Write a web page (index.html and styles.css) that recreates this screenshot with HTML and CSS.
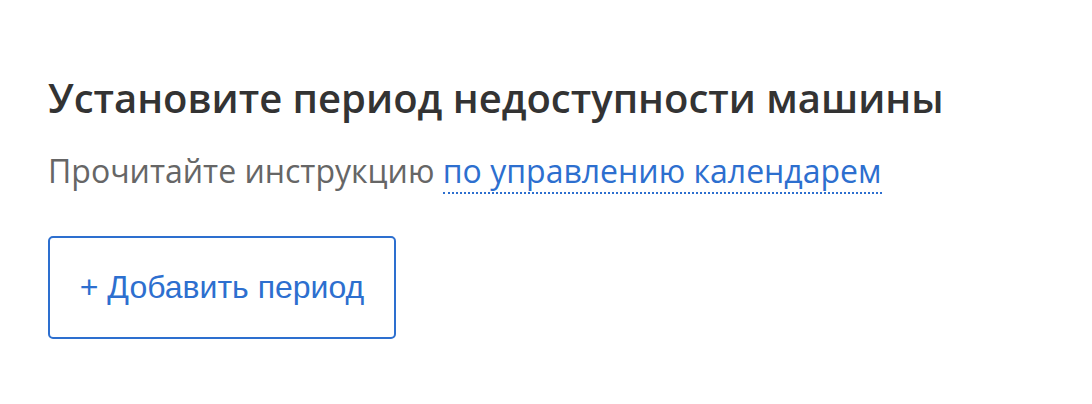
FILE: index.html
```html
<!DOCTYPE html>
<html lang="ru">
<head>
  <meta charset="UTF-8">
  <title>Период недоступности</title>
  <link rel="stylesheet" href="styles.css">
</head>
<body>

<div class="unavailable">
  <h2 class="unavailable-title">Установите период недоступности машины</h2>
  <p class="unavailable-hint">
    Прочитайте инструкцию <a href="#" class="hint-link">по управлению календарем</a>
  </p>
  <button class="add-period">+ Добавить период</button>
</div>

</body>
</html>
```

FILE: styles.css
```css
* {
  box-sizing: border-box;
}

body {
  font-family: "Open Sans", sans-serif;
  margin: 0;
  background: #fff;
}

.unavailable {
  padding: 70px 48px 0;
}

.unavailable-title {
  margin: 0;
  font-size: 40px;
  font-weight: 600;
  line-height: 56px;
  color: #333;
}

.unavailable-hint {
  margin: 23px 0 0;
  font-size: 32px;
  line-height: 44px;
  color: #666;
}

.hint-link {
  color: #2d6fcf;
  text-decoration: none;
  border-bottom: 2px dotted #2d6fcf;
}

.add-period {
  display: block;
  margin-top: 43px;
  width: 348px;
  height: 103px;
  font-family: "Liberation Sans", Arial, sans-serif;
  font-size: 32px;
  color: #2d6fcf;
  background: #fff;
  border: 2px solid #2d6fcf;
  border-radius: 5px;
  cursor: pointer;
}
```
